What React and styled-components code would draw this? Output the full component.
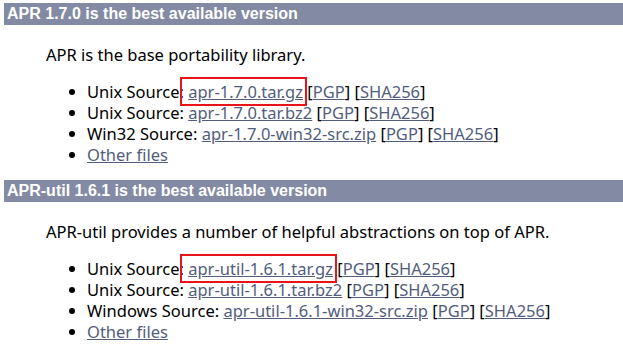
import React from "react";
import styled, { createGlobalStyle } from "styled-components";

const GlobalStyle = createGlobalStyle`
  body {
    margin: 0;
    background: #fff;
    font-family: "Noto Sans", "Open Sans", sans-serif;
    color: #000;
  }
`;

const releases = [
  {
    title: "APR 1.7.0 is the best available version",
    intro: "APR is the base portability library.",
    files: [
      { label: "Unix Source:", name: "apr-1.7.0.tar.gz", marked: true },
      { label: "Unix Source:", name: "apr-1.7.0.tar.bz2" },
      { label: "Win32 Source:", name: "apr-1.7.0-win32-src.zip" },
    ],
  },
  {
    title: "APR-util 1.6.1 is the best available version",
    intro: "APR-util provides a number of helpful abstractions on top of APR.",
    files: [
      { label: "Unix Source:", name: "apr-util-1.6.1.tar.gz", marked: true },
      { label: "Unix Source:", name: "apr-util-1.6.1.tar.bz2" },
      { label: "Windows Source:", name: "apr-util-1.6.1-win32-src.zip" },
    ],
  },
];

function App() {
  return (
    <Page>
      <GlobalStyle />
      {releases.map((r) => (
        <Section key={r.title}>
          <Heading>{r.title}</Heading>
          <Intro>{r.intro}</Intro>
          <FileList>
            {r.files.map((f) => (
              <Item key={f.name}>
                {f.label}{" "}
                <Link href="#" $marked={f.marked}>{f.name}</Link>{" "}
                [<Link href="#">PGP</Link>] [<Link href="#">SHA256</Link>]
              </Item>
            ))}
            <Item>
              <Link href="#">Other files</Link>
            </Item>
          </FileList>
        </Section>
      ))}
    </Page>
  );
}

const Page = styled.div`
  padding: 3px 0 0 4px;
`;
const Section = styled.section`
  margin-bottom: 15px;
`;
const Heading = styled.h2`
  margin: 0;
  height: 22px;
  line-height: 22px;
  padding-left: 3px;
  background: #828ba3;
  color: #fff;
  font-family: "Liberation Sans", Arial, sans-serif;
  font-weight: bold;
  font-size: 16px;
`;
const Intro = styled.p`
  margin: 19px 0 16px 42px;
  font-size: 16.5px;
  line-height: 21px;
`;
const FileList = styled.ul`
  margin: 0;
  padding: 0 0 0 83px;
  list-style: none;
`;
const Item = styled.li`
  position: relative;
  font-size: 16.5px;
  line-height: 21px;
  &::before {
    content: "";
    position: absolute;
    left: -18px;
    top: 8px;
    width: 6px;
    height: 6px;
    border-radius: 50%;
    background: #000;
  }
`;
const Link = styled.a`
  position: relative;
  color: #525d7c;
  text-decoration: underline;
  &::after {
    content: "";
    display: ${(p) => (p.$marked ? "block" : "none")};
    position: absolute;
    left: -8px;
    right: -4px;
    top: -3px;
    bottom: -3px;
    border: 2px solid #e8141a;
  }
`;

export default App;
